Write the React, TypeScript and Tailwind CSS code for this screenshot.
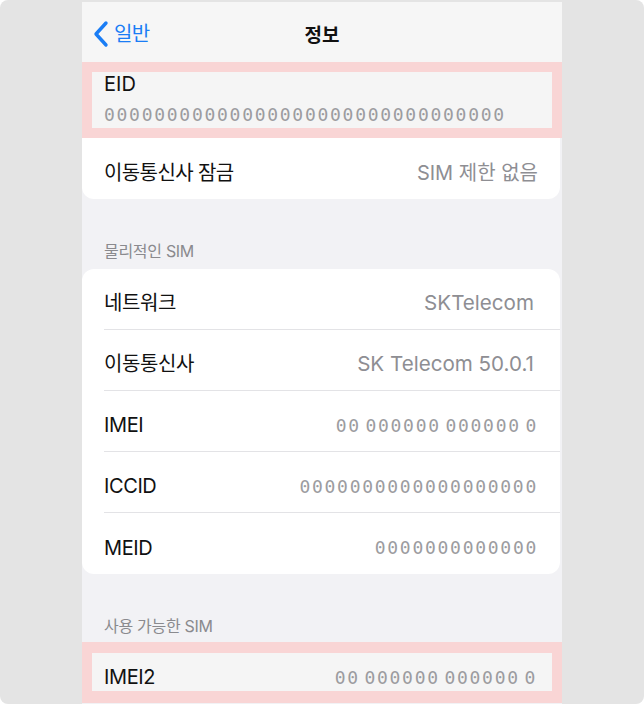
const sans = "font-['Inter','Noto_Sans_CJK_KR',sans-serif]";
const mono = "font-['DejaVu_Sans_Mono',monospace] text-[18px] tracking-[1.72px] [word-spacing:-7.9px] text-[#9c9ca0]";

type Row = { label: string; value: string; digits?: boolean };

const simRows: Row[] = [
  { label: "네트워크", value: "SKTelecom" },
  { label: "이동통신사", value: "SK Telecom 50.0.1" },
  { label: "IMEI", value: "00 000000 000000 0", digits: true },
  { label: "ICCID", value: "0000000000000000000", digits: true },
  { label: "MEID", value: "0000000000000", digits: true },
];

function Chevron() {
  return (
    <svg width="18" height="28" viewBox="0 0 18 28" fill="none">
      <path
        d="M14 3 L4 14 L14 25"
        stroke="#1a7df5"
        strokeWidth="3.4"
        strokeLinecap="round"
        strokeLinejoin="round"
      />
    </svg>
  );
}

function Value({ row }: { row: Row }) {
  if (row.digits) return <span className={mono}>{row.value}</span>;
  return <span className="mr-[4px] text-[20.6px] text-[#8e8e93]">{row.value}</span>;
}

function CardRow({ row, last }: { row: Row; last: boolean }) {
  return (
    <div className="flex h-[61px] pl-[22px]">
      <div
        className={`flex flex-1 items-center justify-between pr-[22px] pt-[8px] ${
          last ? "" : "border-b border-[#e3e3e6]"
        }`}
      >
        <span className="tracking-[-0.4px] text-[#111]">{row.label}</span>
        <Value row={row} />
      </div>
    </div>
  );
}

export default function App() {
  return (
    <div className="min-h-screen bg-white">
      <div className={`h-[704px] w-[644px] overflow-hidden rounded-[8px] bg-[#e4e4e4] px-[82px] pt-[2px] ${sans}`}>
        <div className="flex h-[702px] w-[480px] flex-col bg-[#f2f2f5] text-[20px]">
          {/* Nav bar */}
          <div className="relative flex h-[60px] items-center bg-[#f6f6f6]">
            <div className="flex items-center pl-[10px] pt-[4px] text-[#1a7df5]">
              <Chevron />
              <span className="ml-[4px] text-[20px] tracking-[-0.6px]">일반</span>
            </div>
            <div className="absolute inset-x-0 top-[4px] flex h-[60px] items-center justify-center text-[19px] font-bold text-[#111]">
              정보
            </div>
          </div>

          {/* EID highlighted */}
          <div className="bg-[#f9d5d5] px-[10px] py-[10px]">
            <div className="flex h-[56px] flex-col bg-[#f5f5f5] pl-[12px]">
              <span className="mt-[1px] leading-[22px] text-[#111]">EID</span>
              <span className={`mt-[10px] leading-[20px] ${mono}`}>
                00000000000000000000000000000000
              </span>
            </div>
          </div>

          <div className="mr-[2px] flex h-[61px] items-center justify-between rounded-b-[12px] bg-white pl-[22px] pr-[22px] pt-[8px]">
            <span className="tracking-[-0.6px] text-[#111]">이동통신사 잠금</span>
            <span className="text-[#8e8e93]">SIM 제한 없음</span>
          </div>

          <div className="flex h-[70px] items-end pb-[6px] pl-[22px] text-[16px] tracking-[-0.3px] text-[#8a8a8e]">
            물리적인 SIM
          </div>

          <div className="mr-[2px] flex flex-col rounded-[12px] bg-white">
            {simRows.map((row, i) => (
              <CardRow key={row.label} row={row} last={i === simRows.length - 1} />
            ))}
          </div>

          <div className="flex h-[68px] items-end pb-[4px] pl-[22px] text-[16px] tracking-[-0.3px] text-[#8a8a8e]">
            사용 가능한 SIM
          </div>

          {/* IMEI2 highlighted */}
          <div className="bg-[#f9d5d5] px-[10px] pb-[12px] pt-[11px]">
            <div className="flex h-[38px] items-center justify-between bg-[#f5f5f5] pl-[12px] pr-[15px] pt-[10px]">
              <span className="tracking-[-0.4px] text-[#111]">IMEI2</span>
              <span className={mono}>00 000000 000000 0</span>
            </div>
          </div>
        </div>
      </div>
    </div>
  );
}
